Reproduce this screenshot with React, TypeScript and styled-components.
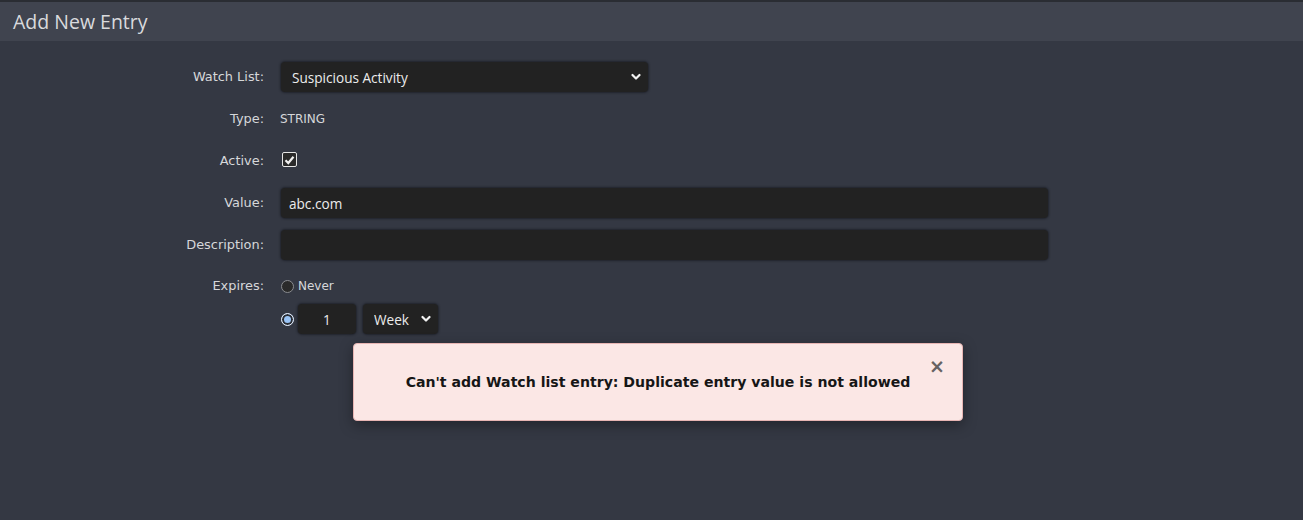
import * as React from "react";
import styled, {createGlobalStyle} from "styled-components";

const GlobalStyle = createGlobalStyle`
    html, body {
      margin: 0;
      padding: 0;
      background-color: #343843;
    }
    * {
      box-sizing: border-box;
    }
`;

const Page = styled.div`
    position: relative;
    min-height: 520px;
    display: flex;
    flex-direction: column;
    background-color: #343843;
    font-family: "DejaVu Sans", Tahoma, sans-serif;
`;

const Header = styled.header`
    height: 41px;
    padding: 0 13px;
    display: flex;
    align-items: center;
    background-color: #40444f;
    border-top: 2px solid #2a2d33;
`;

const Title = styled.h1`
    margin: 0;
    font-family: "Open Sans", sans-serif;
    font-size: 19.5px;
    font-weight: 400;
    color: #d9dadd;
`;

const Form = styled.form`
    display: flex;
    flex-direction: column;
    padding-top: 15px;
`;

const Row = styled.div<{ top?: boolean }>`
    min-height: 42px;
    display: flex;
    align-items: ${p => p.top ? "flex-start" : "center"};
    gap: 17px;
    padding-top: ${p => p.top ? "8px" : "0"};
`;

const Label = styled.label<{ lineHeight?: number }>`
    width: 264px;
    flex: none;
    text-align: right;
    font-size: 12.9px;
    color: #d6d7da;
    line-height: ${p => p.lineHeight || 16}px;
`;

const StaticText = styled.span`
    margin-left: -1px;
    font-size: 12px;
    color: #d6d7da;
`;

const SelectWrap = styled.div<{ width: number }>`
    position: relative;
    width: ${p => p.width}px;
    height: 30px;
`;

const Select = styled.select`
    appearance: none;
    width: 100%;
    height: 100%;
    padding: 0 24px 0 11px;
    border: none;
    border-radius: 4px;
    background-color: #222;
    box-shadow: 0 0 2px 1px rgba(20, 22, 28, 0.6);
    color: #ececec;
    font-family: "Open Sans", sans-serif;
    font-size: 13.6px;
    outline: none;
`;

const Chevron = styled.svg`
    position: absolute;
    right: 7px;
    top: 11px;
    width: 10px;
    height: 8px;
    pointer-events: none;
`;

const TextInput = styled.input<{ width?: number; centered?: boolean }>`
    width: ${p => p.width ? `${p.width}px` : "767px"};
    height: 30px;
    padding: 0 8px;
    border: none;
    border-radius: 4px;
    background-color: #222;
    box-shadow: 0 0 2px 1px rgba(20, 22, 28, 0.6);
    color: #ececec;
    font-family: "Open Sans", sans-serif;
    font-size: 13.6px;
    text-align: ${p => p.centered ? "center" : "left"};
    outline: none;
`;

const CheckBox = styled.span`
    width: 15px;
    height: 15px;
    margin: 0 0 3px 1px;
    display: inline-flex;
    align-items: center;
    justify-content: center;
    border: 1.5px solid #e6e6e6;
    border-radius: 2px;
    background-color: #2a2a2a;
`;

const Radio = styled.span<{ checked?: boolean }>`
    width: 13px;
    height: 13px;
    flex: none;
    border-radius: 50%;
    border: 1px solid ${p => p.checked ? "#e8eef8" : "#8a8c90"};
    background-color: ${p => p.checked ? "#99c3f5" : "#2a2a2a"};
    box-shadow: ${p => p.checked ? "inset 0 0 0 2px #2a2d33" : "none"};
`;

const ExpiresColumn = styled.div`
    display: flex;
    flex-direction: column;
    gap: 8px;
`;

const RadioLine = styled.div`
    height: 22px;
    padding-top: 2px;
    display: flex;
    align-items: center;
    gap: 4px;
    font-size: 12px;
    color: #d6d7da;
`;

const PeriodLine = styled.div`
    display: flex;
    align-items: center;
    gap: 4px;
`;

const PeriodFields = styled.div`
    display: flex;
    align-items: center;
    gap: 7px;
`;

const Alert = styled.div`
    position: absolute;
    left: 353px;
    top: 343px;
    width: 610px;
    height: 78px;
    display: flex;
    align-items: center;
    justify-content: center;
    background-color: #fbe7e5;
    border: 1px solid #e7b5b3;
    border-radius: 4px;
    box-shadow: 0 4px 14px rgba(0, 0, 0, 0.35);
    color: #161616;
    font-size: 14.1px;
    font-weight: bold;
`;

const CloseButton = styled.span`
    position: absolute;
    right: 17px;
    top: 14px;
    color: #666262;
    font-size: 19px;
    font-weight: bold;
    line-height: 16px;
    cursor: pointer;
`;

const ChevronIcon = () => (
  <Chevron viewBox="0 0 10 8">
    <path d="M1.5 2l3.5 3.5L8.5 2" fill="none" stroke="#f2f2f2" strokeWidth="2.2" strokeLinecap="round" strokeLinejoin="round"/>
  </Chevron>
);

export default function App() {
  return (
    <Page>
      <GlobalStyle/>
      <Header>
        <Title>Add New Entry</Title>
      </Header>
      <Form onSubmit={e => e.preventDefault()}>
        <Row>
          <Label>Watch List:</Label>
          <SelectWrap width={367}>
            <Select defaultValue="suspicious">
              <option value="suspicious">Suspicious Activity</option>
            </Select>
            <ChevronIcon/>
          </SelectWrap>
        </Row>
        <Row>
          <Label>Type:</Label>
          <StaticText>STRING</StaticText>
        </Row>
        <Row>
          <Label>Active:</Label>
          <CheckBox>
            <svg width="11" height="10" viewBox="0 0 11 10">
              <path d="M1.5 5.2l2.8 2.8L9.5 1.8" fill="none" stroke="#f0f0f0" strokeWidth="2.2"/>
            </svg>
          </CheckBox>
        </Row>
        <Row>
          <Label>Value:</Label>
          <TextInput defaultValue="abc.com"/>
        </Row>
        <Row>
          <Label>Description:</Label>
          <TextInput/>
        </Row>
        <Row top>
          <Label lineHeight={24}>Expires:</Label>
          <ExpiresColumn>
            <RadioLine>
              <Radio/>
              Never
            </RadioLine>
            <PeriodLine>
              <Radio checked/>
              <PeriodFields>
                <TextInput width={58} centered defaultValue="1"/>
                <SelectWrap width={75}>
                  <Select defaultValue="week">
                    <option value="week">Week</option>
                  </Select>
                  <ChevronIcon/>
                </SelectWrap>
              </PeriodFields>
            </PeriodLine>
          </ExpiresColumn>
        </Row>
      </Form>
      <Alert>
        Can't add Watch list entry: Duplicate entry value is not allowed
        <CloseButton>×</CloseButton>
      </Alert>
    </Page>
  );
}
